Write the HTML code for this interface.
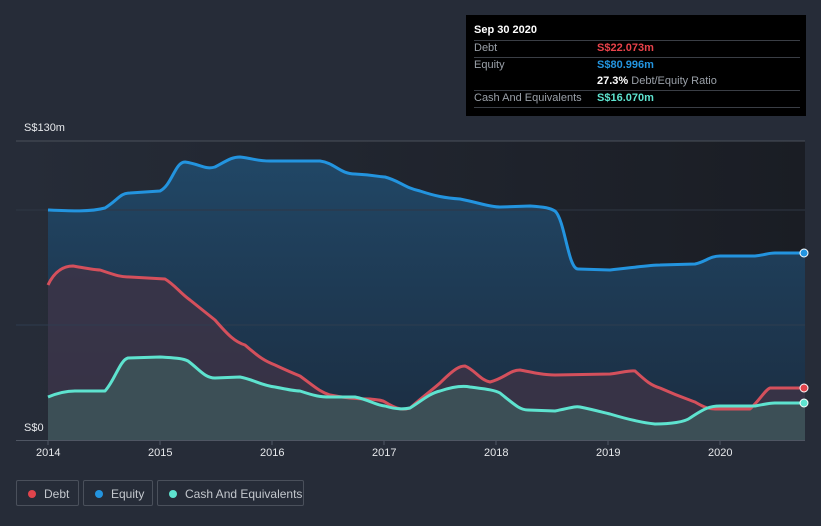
<!DOCTYPE html>
<html><head><meta charset="utf-8"><style>
body{margin:0;width:821px;height:526px;background:#262c38;font-family:"Liberation Sans",sans-serif;overflow:hidden;position:relative}
.tip{position:absolute;left:466px;top:15px;width:340px;height:101px;background:#000;color:#fff;font-size:11px}
.tip .r{position:absolute;left:8px;width:326px;border-top:1px solid #3a3e45}
.lbl{color:#9aa0a8}
.leg{position:absolute;top:480px;height:26px;border:1px solid #4a505b;border-radius:2px;color:#c3c7cd;font-size:12px;line-height:26px;box-sizing:border-box}
.leg i{display:inline-block;width:8px;height:8px;border-radius:50%;margin:0 8px 0 11px;vertical-align:-0px}
.ax{position:absolute;color:#e6e8eb;font-size:11px}
</style></head><body>
<svg width="821" height="526" style="position:absolute;left:0;top:0">
<defs>
<linearGradient id="bg" x1="0" x2="1"><stop offset="0" stop-color="#262c38"/><stop offset="1" stop-color="#1a1d24"/></linearGradient>
<linearGradient id="eq" x1="0" y1="0" x2="0" y2="1"><stop offset="0" stop-color="#214766"/><stop offset="1" stop-color="#1b2c40"/></linearGradient>
</defs>
<rect x="16" y="141" width="789" height="299" fill="url(#bg)"/>
<path d="M48,210 C70,211 90,212 105,208 C118,200 120,193 130,193 L160,191 C172,185 175,162 185,162 C200,164 205,170 215,167 C228,160 232,157 240,157 C255,159 258,161 270,161 L320,161 C335,163 340,174 355,174 C375,175 380,177 385,177 C400,181 405,188 420,191 C435,196 445,198 460,199 C480,203 490,207 500,207 L530,206 C545,207 550,208 555,211 C565,220 568,269 578,269 L610,270 C630,268 650,265 660,265 L695,264 C705,262 710,256 720,256 L755,256 C765,255 768,253 775,253 L805,253 L805,440 L48,440 Z" fill="url(#eq)"/>
<path d="M48,285 C55,270 65,266 73,266 C85,268 95,270 100,270 C115,275 120,277 130,277 L165,279 C175,285 180,293 190,300 C200,308 210,316 215,320 C228,335 235,342 245,345 C260,358 265,361 275,365 C290,372 295,374 300,376 C315,387 320,392 330,395 C345,398 360,399 370,399 C378,400 382,400 385,402 C398,410 403,410 410,408 C425,395 432,390 440,383 C455,368 460,366 465,366 C475,370 480,380 490,382 C505,378 510,370 520,370 C535,373 545,375 555,375 L610,374 C620,373 630,370 635,371 C645,380 650,385 660,388 C680,397 690,400 695,402 C705,408 710,409 715,409 L750,409 C760,400 765,390 770,388 L805,388 L805,440 L48,440 Z" fill="#3c3446" opacity=".85"/>
<path d="M48,397 C60,392 70,391 75,391 L105,391 C115,380 120,360 128,358 L160,357 C175,358 182,358 188,361 C200,370 205,378 215,378 L240,377 C255,380 260,385 275,387 C290,390 295,391 300,391 C315,396 320,397 330,397 L355,397 C370,400 375,405 385,406 C398,410 405,409 410,408 C420,402 430,393 440,391 C455,386 465,386 470,387 C485,389 495,390 500,393 C515,405 520,410 528,410 L555,411 C570,408 575,406 580,407 C595,410 605,413 610,414 C630,420 645,423 655,424 C670,424 685,422 690,418 C705,408 710,406 720,406 L755,406 C765,404 770,403 775,403 L805,403 L805,440 L48,440 Z" fill="#3d5258" opacity=".9"/>
<line x1="16" y1="141" x2="805" y2="141" stroke="#4a505a" stroke-width="1"/>
<line x1="16" y1="210" x2="805" y2="210" stroke="#2f3744" stroke-width="1"/>
<line x1="16" y1="325" x2="805" y2="325" stroke="#2f3d4f" stroke-width="1"/>
<g fill="none" stroke-width="3" stroke-linejoin="round">
<path stroke="#2394df" d="M48,210 C70,211 90,212 105,208 C118,200 120,193 130,193 L160,191 C172,185 175,162 185,162 C200,164 205,170 215,167 C228,160 232,157 240,157 C255,159 258,161 270,161 L320,161 C335,163 340,174 355,174 C375,175 380,177 385,177 C400,181 405,188 420,191 C435,196 445,198 460,199 C480,203 490,207 500,207 L530,206 C545,207 550,208 555,211 C565,220 568,269 578,269 L610,270 C630,268 650,265 660,265 L695,264 C705,262 710,256 720,256 L755,256 C765,255 768,253 775,253 L805,253"/>
<path stroke="#d4505c" d="M48,285 C55,270 65,266 73,266 C85,268 95,270 100,270 C115,275 120,277 130,277 L165,279 C175,285 180,293 190,300 C200,308 210,316 215,320 C228,335 235,342 245,345 C260,358 265,361 275,365 C290,372 295,374 300,376 C315,387 320,392 330,395 C345,398 360,399 370,399 C378,400 382,400 385,402 C398,410 403,410 410,408 C425,395 432,390 440,383 C455,368 460,366 465,366 C475,370 480,380 490,382 C505,378 510,370 520,370 C535,373 545,375 555,375 L610,374 C620,373 630,370 635,371 C645,380 650,385 660,388 C680,397 690,400 695,402 C705,408 710,409 715,409 L750,409 C760,400 765,390 770,388 L805,388"/>
<path stroke="#5ee3cf" d="M48,397 C60,392 70,391 75,391 L105,391 C115,380 120,360 128,358 L160,357 C175,358 182,358 188,361 C200,370 205,378 215,378 L240,377 C255,380 260,385 275,387 C290,390 295,391 300,391 C315,396 320,397 330,397 L355,397 C370,400 375,405 385,406 C398,410 405,409 410,408 C420,402 430,393 440,391 C455,386 465,386 470,387 C485,389 495,390 500,393 C515,405 520,410 528,410 L555,411 C570,408 575,406 580,407 C595,410 605,413 610,414 C630,420 645,423 655,424 C670,424 685,422 690,418 C705,408 710,406 720,406 L755,406 C765,404 770,403 775,403 L805,403"/>
</g>
<circle cx="804" cy="253" r="4" fill="#2394df" stroke="#fff" stroke-width="1"/>
<circle cx="804" cy="388" r="4" fill="#e0444c" stroke="#fff" stroke-width="1"/>
<circle cx="804" cy="403" r="4" fill="#5ee3cf" stroke="#fff" stroke-width="1"/>
<line x1="16" y1="440.5" x2="805" y2="440.5" stroke="#4f5663" stroke-width="1"/>
<g stroke="#4f5663"><line x1="48" y1="440" x2="48" y2="445"/><line x1="160" y1="440" x2="160" y2="445"/><line x1="272" y1="440" x2="272" y2="445"/><line x1="384" y1="440" x2="384" y2="445"/><line x1="496" y1="440" x2="496" y2="445"/><line x1="608" y1="440" x2="608" y2="445"/><line x1="720" y1="440" x2="720" y2="445"/></g>
</svg>
<div class="ax" style="left:24px;top:122px">S$130m</div>
<div class="ax" style="left:24px;top:422px">S$0</div>
<div class="ax" style="left:36px;top:447px">2014</div>
<div class="ax" style="left:148px;top:447px">2015</div>
<div class="ax" style="left:260px;top:447px">2016</div>
<div class="ax" style="left:372px;top:447px">2017</div>
<div class="ax" style="left:484px;top:447px">2018</div>
<div class="ax" style="left:596px;top:447px">2019</div>
<div class="ax" style="left:708px;top:447px">2020</div>
<div class="tip">
<div style="position:absolute;left:8px;top:9px;font-weight:bold">Sep 30 2020</div>
<div class="r" style="top:25px"></div>
<div class="lbl" style="position:absolute;left:8px;top:27px">Debt</div>
<div style="position:absolute;left:131px;top:27px;color:#e8424a;font-weight:bold">S$22.073m</div>
<div class="r" style="top:42px"></div>
<div class="lbl" style="position:absolute;left:8px;top:44px">Equity</div>
<div style="position:absolute;left:131px;top:44px;color:#2394df;font-weight:bold">S$80.996m</div>
<div style="position:absolute;left:131px;top:60px"><b>27.3%</b> <span class="lbl">Debt/Equity Ratio</span></div>
<div class="r" style="top:75px"></div>
<div class="lbl" style="position:absolute;left:8px;top:77px">Cash And Equivalents</div>
<div style="position:absolute;left:131px;top:77px;color:#5ee3cf;font-weight:bold">S$16.070m</div>
<div class="r" style="top:92px"></div>
</div>
<div class="leg" style="left:16px;width:63px"><i style="background:#e0444c"></i>Debt</div>
<div class="leg" style="left:83px;width:70px"><i style="background:#2394df"></i>Equity</div>
<div class="leg" style="left:157px;width:147px"><i style="background:#5ee3cf"></i>Cash And Equivalents</div>
</body></html>
